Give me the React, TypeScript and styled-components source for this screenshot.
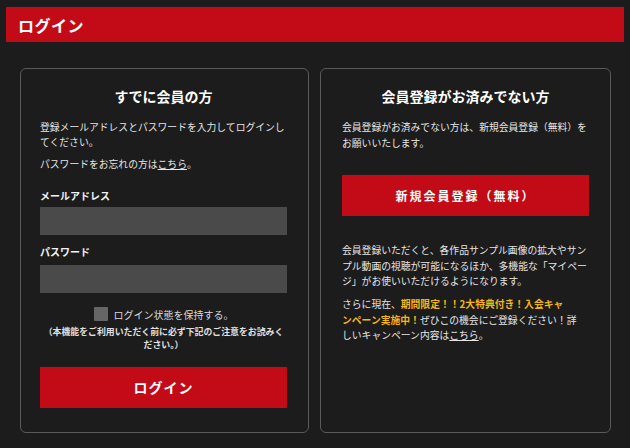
import React from "react";
import styled, { createGlobalStyle } from "styled-components";

const GlobalStyle = createGlobalStyle`
  html, body {
    margin: 0;
    padding: 0;
    background: #1c1c1c;
  }
  body {
    font-family: "Noto Sans CJK JP", "Noto Sans", sans-serif;
    color: #e8e8e8;
  }
`;

const Page = styled.div`
  padding: 7px 6px 0;
  width: 618px;
`;

const Header = styled.h1`
  margin: 0;
  height: 35px;
  background: #c30b17;
  color: #ffffff;
  font-size: 16px;
  font-weight: 700;
  display: flex;
  align-items: center;
  padding-left: 12px;
  letter-spacing: 0.5px;
`;

const Columns = styled.div`
  display: grid;
  grid-template-columns: 289px 291px;
  column-gap: 11px;
  padding: 26px 0 0 14px;
`;

const Panel = styled.section<{ $side: "left" | "right" }>`
  border: 1px solid #5a5a5a;
  border-radius: 6px;
  padding: 17px ${(p) => (p.$side === "left" ? "21px 24px 19px" : "21px 24px 21px")};
  display: flex;
  flex-direction: column;
`;

const Title = styled.h2`
  margin: 0 0 14px;
  font-size: 14px;
  line-height: 20px;
  font-weight: 700;
  color: #ffffff;
  text-align: center;
`;

const Text = styled.p<{ $gap?: number; $lh?: number }>`
  margin: ${(p) => p.$gap ?? 0}px 0 0;
  font-size: 9.8px;
  line-height: ${(p) => p.$lh ?? 15}px;
  color: #e6e6e6;
`;

const Link = styled.a`
  color: inherit;
  text-decoration: underline;
`;

const Highlight = styled.span`
  color: #f4b41a;
  font-weight: 700;
`;

const Label = styled.label<{ $gap: number }>`
  display: block;
  margin-top: ${(p) => p.$gap}px;
  font-size: 10px;
  line-height: 15px;
  font-weight: 700;
  color: #f2f2f2;
`;

const Input = styled.input<{ $gap: number }>`
  display: block;
  box-sizing: border-box;
  margin-top: ${(p) => p.$gap}px;
  width: 100%;
  height: 28px;
  border: none;
  outline: none;
  background: #4a4a4a;
  color: #fff;
  padding: 0 8px;
`;

const CheckRow = styled.label`
  margin-top: 14px;
  display: flex;
  align-items: center;
  justify-content: center;
  gap: 6px;
  font-size: 10px;
  line-height: 15px;
  color: #d8d8d8;
`;

const CheckBox = styled.span`
  width: 14px;
  height: 14px;
  background: #666666;
  border-radius: 1px;
`;

const Note = styled.p`
  margin: 3px 0 0;
  font-size: 8.9px;
  line-height: 13.5px;
  font-weight: 700;
  color: #e0e0e0;
  text-align: center;
`;

const RedButton = styled.button<{ $gap: number; $small?: boolean }>`
  margin-top: ${(p) => p.$gap}px;
  width: 100%;
  height: 41px;
  border: none;
  background: #c30b17;
  color: #ffffff;
  font-family: inherit;
  font-weight: 700;
  font-size: ${(p) => (p.$small ? 12 : 14)}px;
  letter-spacing: ${(p) => (p.$small ? 2 : 1)}px;
  cursor: pointer;
`;

export default function App() {
  return (
    <>
      <GlobalStyle />
      <Page>
        <Header>ログイン</Header>
        <Columns>
          <Panel $side="left">
            <Title>すでに会員の方</Title>
            <Text>
              登録メールアドレスとパスワードを入力してログインし
              <br />
              てください。
            </Text>
            <Text $gap={7}>
              パスワードをお忘れの方は<Link>こちら</Link>。
            </Text>
            <Label $gap={16}>メールアドレス</Label>
            <Input $gap={3.5} type="text" />
            <Label $gap={9.5}>パスワード</Label>
            <Input $gap={5.5} type="password" />
            <CheckRow>
              <CheckBox />
              ログイン状態を保持する。
            </CheckRow>
            <Note>
              （本機能をご利用いただく前に必ず下記のご注意をお読みく
              <br />
              ださい。）
            </Note>
            <RedButton $gap={15}>ログイン</RedButton>
          </Panel>
          <Panel $side="right">
            <Title>会員登録がお済みでない方</Title>
            <Text $lh={15.5}>
              会員登録がお済みでない方は、新規会員登録（無料）を
              <br />
              お願いいたします。
            </Text>
            <RedButton $gap={24} $small>
              新規会員登録（無料）
            </RedButton>
            <Text $gap={27} $lh={15.5}>
              会員登録いただくと、各作品サンプル画像の拡大やサン
              <br />
              プル動画の視聴が可能になるほか、多機能な「マイペー
              <br />
              ジ」がお使いいただけるようになります。
            </Text>
            <Text $gap={7.5} $lh={15.5}>
              さらに現在、<Highlight>期間限定！！2大特典付き！入会キャ</Highlight>
              <br />
              <Highlight>ンペーン実施中！</Highlight>ぜひこの機会にご登録ください！詳
              <br />
              しいキャンペーン内容は<Link>こちら</Link>。
            </Text>
          </Panel>
        </Columns>
      </Page>
    </>
  );
}
